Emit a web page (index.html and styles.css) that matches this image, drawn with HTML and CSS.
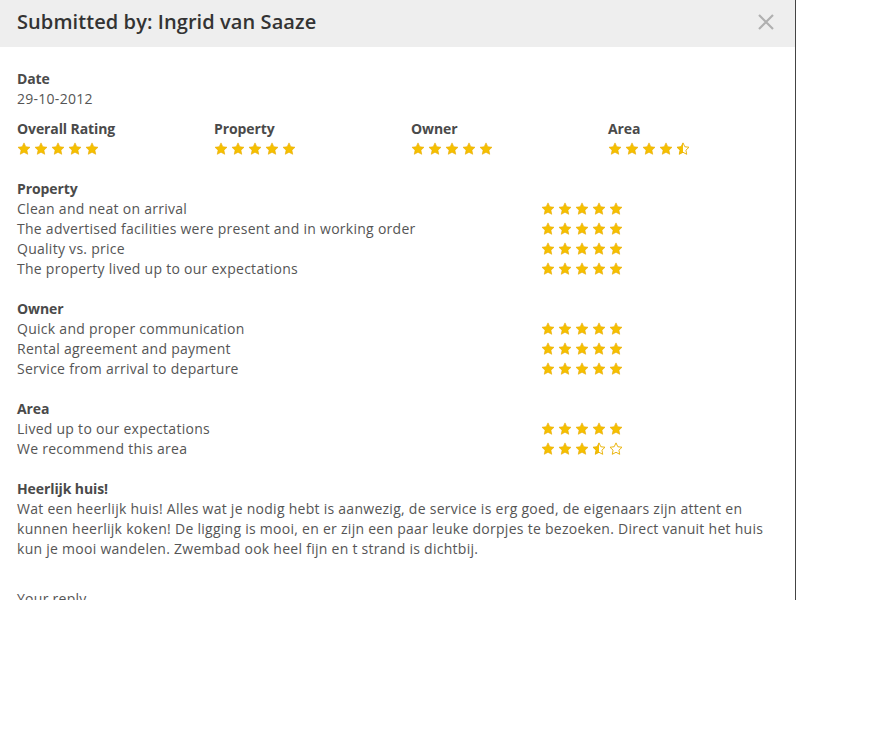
FILE: index.html
```html
<!DOCTYPE html>
<html>
<head>
<meta charset="utf-8">
<link rel="stylesheet" href="styles.css">
</head>
<body>
<svg class="defs" width="0" height="0">
  <defs>
    <symbol id="star" viewBox="0 0 24 24"><path d="M12 1.5l3.1 6.6 7.2.9-5.3 5 1.4 7.1L12 17.6l-6.4 3.5L7 14l-5.3-5 7.2-.9z"/></symbol>
    <linearGradient id="halfg"><stop offset="50%" stop-color="#f5c000"/><stop offset="50%" stop-color="#fff"/></linearGradient>
  </defs>
</svg>
<div class="modal">
  <div class="modal-header">
    <h1 class="title">Submitted by: Ingrid van Saaze</h1>
    <svg class="close" width="18" height="18" viewBox="0 0 18 18"><path d="M2 2L16 16M16 2L2 16" stroke="#b0b0b0" stroke-width="2.2"/></svg>
  </div>
  <div class="modal-body">
    <div class="field">
      <div class="label">Date</div>
      <div>29-10-2012</div>
    </div>
    <div class="summary">
      <div><div class="label">Overall Rating</div><div class="stars"><svg class="s"><use href="#star"/></svg><svg class="s"><use href="#star"/></svg><svg class="s"><use href="#star"/></svg><svg class="s"><use href="#star"/></svg><svg class="s"><use href="#star"/></svg></div></div>
      <div><div class="label">Property</div><div class="stars"><svg class="s"><use href="#star"/></svg><svg class="s"><use href="#star"/></svg><svg class="s"><use href="#star"/></svg><svg class="s"><use href="#star"/></svg><svg class="s"><use href="#star"/></svg></div></div>
      <div><div class="label">Owner</div><div class="stars"><svg class="s"><use href="#star"/></svg><svg class="s"><use href="#star"/></svg><svg class="s"><use href="#star"/></svg><svg class="s"><use href="#star"/></svg><svg class="s"><use href="#star"/></svg></div></div>
      <div><div class="label">Area</div><div class="stars"><svg class="s"><use href="#star"/></svg><svg class="s"><use href="#star"/></svg><svg class="s"><use href="#star"/></svg><svg class="s"><use href="#star"/></svg><svg class="s half"><use href="#star"/></svg></div></div>
    </div>

    <div class="section">
      <div class="label">Property</div>
      <div class="row"><span>Clean and neat on arrival</span><div class="stars"><svg class="s"><use href="#star"/></svg><svg class="s"><use href="#star"/></svg><svg class="s"><use href="#star"/></svg><svg class="s"><use href="#star"/></svg><svg class="s"><use href="#star"/></svg></div></div>
      <div class="row"><span>The advertised facilities were present and in working order</span><div class="stars"><svg class="s"><use href="#star"/></svg><svg class="s"><use href="#star"/></svg><svg class="s"><use href="#star"/></svg><svg class="s"><use href="#star"/></svg><svg class="s"><use href="#star"/></svg></div></div>
      <div class="row"><span>Quality vs. price</span><div class="stars"><svg class="s"><use href="#star"/></svg><svg class="s"><use href="#star"/></svg><svg class="s"><use href="#star"/></svg><svg class="s"><use href="#star"/></svg><svg class="s"><use href="#star"/></svg></div></div>
      <div class="row"><span>The property lived up to our expectations</span><div class="stars"><svg class="s"><use href="#star"/></svg><svg class="s"><use href="#star"/></svg><svg class="s"><use href="#star"/></svg><svg class="s"><use href="#star"/></svg><svg class="s"><use href="#star"/></svg></div></div>
    </div>

    <div class="section">
      <div class="label">Owner</div>
      <div class="row"><span>Quick and proper communication</span><div class="stars"><svg class="s"><use href="#star"/></svg><svg class="s"><use href="#star"/></svg><svg class="s"><use href="#star"/></svg><svg class="s"><use href="#star"/></svg><svg class="s"><use href="#star"/></svg></div></div>
      <div class="row"><span>Rental agreement and payment</span><div class="stars"><svg class="s"><use href="#star"/></svg><svg class="s"><use href="#star"/></svg><svg class="s"><use href="#star"/></svg><svg class="s"><use href="#star"/></svg><svg class="s"><use href="#star"/></svg></div></div>
      <div class="row"><span>Service from arrival to departure</span><div class="stars"><svg class="s"><use href="#star"/></svg><svg class="s"><use href="#star"/></svg><svg class="s"><use href="#star"/></svg><svg class="s"><use href="#star"/></svg><svg class="s"><use href="#star"/></svg></div></div>
    </div>

    <div class="section">
      <div class="label">Area</div>
      <div class="row"><span>Lived up to our expectations</span><div class="stars"><svg class="s"><use href="#star"/></svg><svg class="s"><use href="#star"/></svg><svg class="s"><use href="#star"/></svg><svg class="s"><use href="#star"/></svg><svg class="s"><use href="#star"/></svg></div></div>
      <div class="row"><span>We recommend this area</span><div class="stars"><svg class="s"><use href="#star"/></svg><svg class="s"><use href="#star"/></svg><svg class="s"><use href="#star"/></svg><svg class="s half"><use href="#star"/></svg><svg class="s empty"><use href="#star"/></svg></div></div>
    </div>

    <div class="review">
      <div class="label">Heerlijk huis!</div>
      <p>Wat een heerlijk huis! Alles wat je nodig hebt is aanwezig, de service is erg goed, de eigenaars zijn attent en kunnen heerlijk koken! De ligging is mooi, en er zijn een paar leuke dorpjes te bezoeken. Direct vanuit het huis kun je mooi wandelen. Zwembad ook heel fijn en t strand is dichtbij.</p>
    </div>

    <div class="reply">Your reply</div>
  </div>
</div>
</body>
</html>
```

FILE: styles.css
```css
html, body {
  margin: 0;
  padding: 0;
  background: #fff;
}
.defs {
  position: absolute;
  width: 0;
  height: 0;
}
.modal {
  width: 795px;
  height: 600px;
  overflow: hidden;
  border-right: 1px solid #444;
  font-family: "Open Sans", "Liberation Sans", sans-serif;
  font-size: 14px;
  line-height: 20px;
  color: #555;
  letter-spacing: 0.27px;
}
.modal-header {
  height: 47px;
  background: #eeeeee;
  display: flex;
  align-items: center;
  justify-content: space-between;
  padding: 0 20px 0 17px;
}
.title {
  margin: 0;
  font-size: 20px;
  font-weight: 600;
  color: #333;
  line-height: 28px;
  padding-bottom: 3px;
  letter-spacing: 0.08px;
}
.close {
  display: block;
  margin-bottom: 3px;
}
.modal-body {
  padding: 22px 17px 0 17px;
}
.label {
  font-weight: 700;
  color: #4a4a4a;
  letter-spacing: -0.1px;
}
.summary {
  display: grid;
  grid-template-columns: 197px 197px 197px 197px;
  margin-top: 10px;
}
.stars {
  display: flex;
  align-items: center;
  height: 20px;
}
.s {
  width: 14px;
  height: 14px;
  margin-right: 3px;
  fill: #f5c000;
  stroke: #e8a800;
  stroke-width: 1;
}
.s.half {
  fill: url(#halfg);
  stroke: #e8b000;
  stroke-width: 1.6;
}
.s.empty {
  fill: #fff;
  stroke: #e8b000;
  stroke-width: 1.6;
}
.section {
  margin-top: 20px;
}
.row {
  display: grid;
  grid-template-columns: 524px auto;
}
.review {
  margin-top: 20px;
}
.review p {
  margin: 0;
}
.reply {
  margin-top: 30px;
}
```
